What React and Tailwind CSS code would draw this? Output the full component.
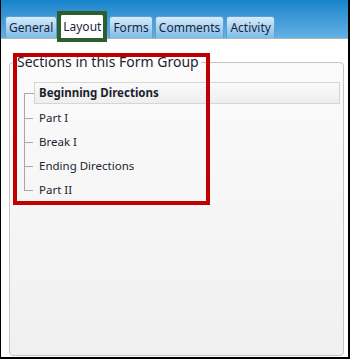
export default function App() {
  const tabs = ["General", "Layout", "Forms", "Comments", "Activity"];
  const items = ["Part I", "Break I", "Ending Directions", "Part II"];
  return (
    <div
      className="relative w-[350px] h-[359px] bg-white border-l border-r-2 border-b-2 border-black overflow-hidden"
      style={{ fontFamily: '"Noto Sans", "Open Sans", sans-serif' }}
    >
      {/* header with tabs */}
      <div className="h-[39px] bg-gradient-to-b from-[#1283cb] to-[#62b2e4] border-b border-[#b5b5b5] flex items-end pl-[4px] gap-[2px]">
        {tabs.map((t) =>
          t === "Layout" ? (
            <div
              key={t}
              className="relative ml-[1px] mr-[3px] h-[24px] px-[2px] bg-white border border-[#8fb8d8] border-b-0 rounded-t-[3px] flex items-center text-[12px] text-[#1b1f3f]"
            >
              {t}
              <div className="absolute -inset-x-[4px] -top-[4px] -bottom-[4px] border-4 border-[#2e5d2e]" />
            </div>
          ) : (
            <div
              key={t}
              className="h-[22px] px-[3px] bg-gradient-to-b from-[#d6ecfa] to-[#7cbde8] border border-[#5d9fd0] border-b-0 rounded-t-[3px] flex items-center text-[12px] text-[#1b1f3f]"
            >
              {t}
            </div>
          )
        )}
      </div>

      {/* content */}
      <div className="pl-[8px] pr-[4px] pt-[14px]">
        <fieldset className="h-[303px] border border-[#c4c4c4] rounded-[4px] bg-gradient-to-b from-[#fbfbfb] to-[#f0f0f0] pr-[3px]">
          <legend className="ml-[5px] px-[2px] text-[14px] leading-[18px] text-[#1e1e2e]">
            Sections in this Form Group
          </legend>
          <div className="relative mt-[11px] ml-[24px]">
            <div className="absolute left-[-10px] top-[11px] w-px h-[97px] bg-[#a8a8a8]" />
            <div className="flex items-center">
              <div className="w-[10px] h-px bg-[#a8a8a8] ml-[-10px]" />
              <div className="flex-1 h-[22px] border border-[#d6d6d6] bg-gradient-to-b from-[#fafafa] to-[#eeeeee] flex items-center pl-[4px] text-[11.5px] font-bold text-[#1e1e2e]">
                Beginning Directions
              </div>
            </div>
            <div className="flex flex-col pt-[2px]">
              {items.map((it) => (
                <div key={it} className="h-[24px] flex items-center ml-[-10px]">
                  <div className="w-[9px] h-px bg-[#a8a8a8]" />
                  <span className="pl-[6px] text-[11.5px] text-[#1e1e2e]">{it}</span>
                </div>
              ))}
            </div>
          </div>
        </fieldset>
      </div>

      {/* red annotation box */}
      <div className="absolute left-[12px] top-[53px] w-[197px] h-[152px] border-4 border-[#c00000]" />
    </div>
  );
}
